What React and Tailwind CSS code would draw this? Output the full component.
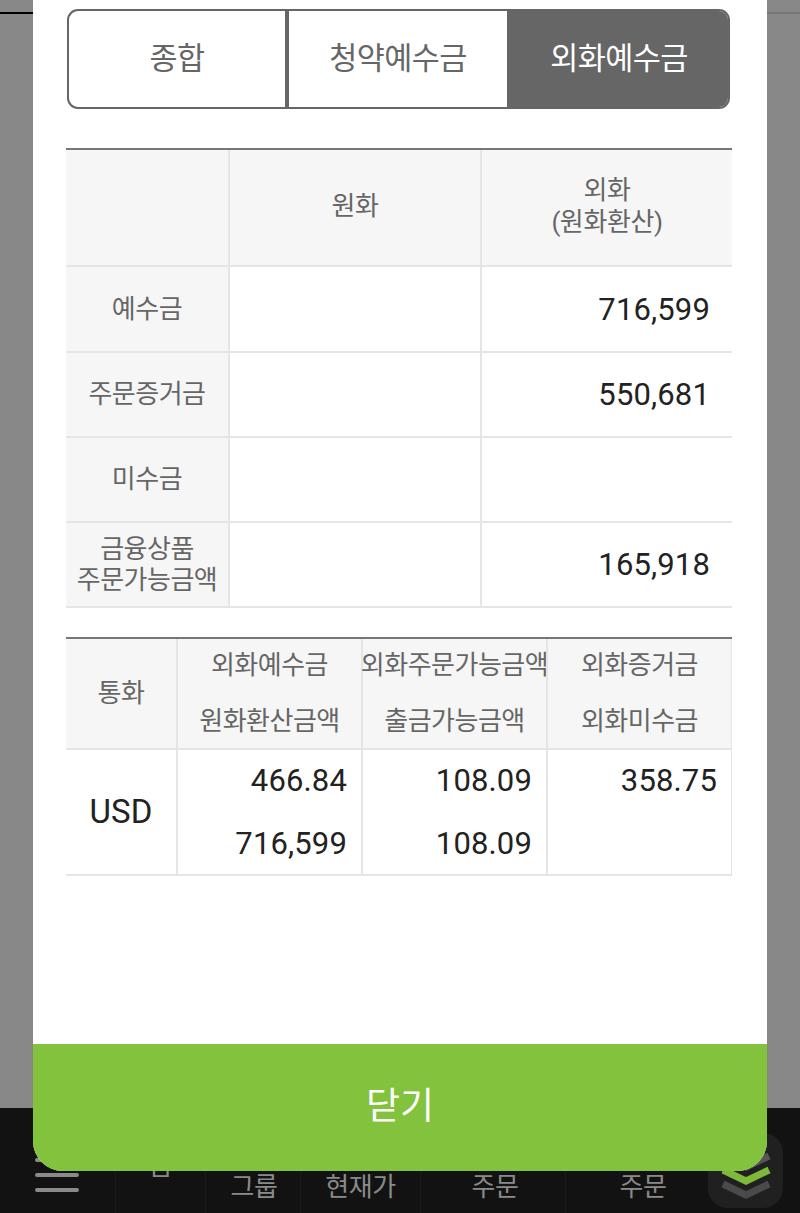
const tabs = [
  { label: '종합', cls: 'w-[220px] border-r-[4px] border-[#666] text-[#666]' },
  { label: '청약예수금', cls: 'w-[218px] text-[#666]' },
  { label: '외화예수금', cls: 'flex-1 bg-[#666] pl-[3px] text-white' },
];

const balanceRows = [
  { label: ['예수금'], value: '716,599', h: 'h-[86px]' },
  { label: ['주문증거금'], value: '550,681', h: 'h-[85px]' },
  { label: ['미수금'], value: '', h: 'h-[85px]' },
  { label: ['금융상품', '주문가능금액'], value: '165,918', h: 'h-[85px]' },
];

const currencyHeads = [
  { top: '외화예수금', bottom: '원화환산금액', w: 'w-[185px]' },
  { top: '외화주문가능금액', bottom: '출금가능금액', w: 'w-[185px]' },
  { top: '외화증거금', bottom: '외화미수금', w: 'w-[186px] border-r' },
];

const currencyVals = [
  { top: '466.84', bottom: '716,599', w: 'w-[185px]' },
  { top: '108.09', bottom: '108.09', w: 'w-[185px]' },
  { top: '358.75', bottom: '', w: 'w-[186px] border-r' },
];

function BalanceTable() {
  return (
    <div className="mt-[39px] w-[666px] border-t-2 border-[#777]">
      <div className="flex h-[117px] border-b-2 border-[#e5e5e5] text-[26px] leading-[32px] tracking-[-0.4px] text-[#666]">
        <div className="w-[162px] bg-[#f6f6f6]" />
        <div className="flex w-[252px] items-center justify-center border-l-2 border-[#e5e5e5] bg-[#f6f6f6] pb-[4px]">원화</div>
        <div className="flex w-[252px] flex-col items-center justify-center border-l-2 border-[#e5e5e5] bg-[#f6f6f6] pb-[4px]">
          <span>외화</span>
          <span>(원화환산)</span>
        </div>
      </div>
      {balanceRows.map((row) => (
        <div key={row.label[0]} className={`flex border-b-2 border-[#e5e5e5] ${row.h}`}>
          <div className="flex w-[162px] flex-col items-center justify-center bg-[#f6f6f6] text-[26px] leading-[31px] tracking-[-0.5px] text-[#666]">
            {row.label.map((line) => (
              <span key={line}>{line}</span>
            ))}
          </div>
          <div className="w-[252px] border-l-2 border-[#e5e5e5]" />
          <div className="flex w-[252px] items-center justify-end border-l-2 border-[#e5e5e5] pt-[2px] pr-[22px] text-[31px] tracking-[0.15px] text-[#222]">
            {row.value}
          </div>
        </div>
      ))}
    </div>
  );
}

function CurrencyTable() {
  return (
    <div className="mt-[29px] w-[666px] border-t-2 border-[#777]">
      <div className="flex h-[111px] border-b-2 border-[#e5e5e5] bg-[#f6f6f6] text-[26px] tracking-[-0.5px] text-[#666]">
        <div className="flex w-[110px] items-center justify-center">통화</div>
        {currencyHeads.map((col) => (
          <div key={col.top} className={`flex flex-col items-center justify-center gap-[24px] border-l-2 border-[#e5e5e5] pb-[2px] leading-[32px] whitespace-nowrap ${col.w}`}>
            <span>{col.top}</span>
            <span>{col.bottom}</span>
          </div>
        ))}
      </div>
      <div className="flex h-[126px] border-b-2 border-[#e5e5e5] text-[31px] leading-[36px] tracking-[0.15px] text-[#222]">
        <div className="flex w-[110px] items-center justify-center text-[33px]">USD</div>
        {currencyVals.map((col) => (
          <div key={col.top} className={`flex flex-col items-end gap-[27px] border-l-2 border-[#e5e5e5] pt-[13px] pr-[14px] ${col.w}`}>
            <span>{col.top}</span>
            <span>{col.bottom}</span>
          </div>
        ))}
      </div>
    </div>
  );
}

function BottomBar() {
  return (
    <div className="flex h-[105px] shrink-0 bg-[#121212] text-[26px] tracking-[-0.5px] text-[#8a8a8a]">
      <div className="flex w-[115px] flex-col gap-[11px] pt-[50px] pl-[35px]">
        <span className="h-[4px] w-[44px] rounded-full bg-[#8a8a8a]" />
        <span className="h-[4px] w-[44px] rounded-full bg-[#8a8a8a]" />
        <span className="h-[4px] w-[44px] rounded-full bg-[#8a8a8a]" />
      </div>
      <div className="w-[90px] border-l border-[#1b1b1b] pt-[42px] text-center leading-[32px]">름</div>
      <div className="w-[95px] border-l border-[#1b1b1b] pt-[61px] pl-[2px] text-center leading-[36px]">그룹</div>
      <div className="w-[120px] border-l border-[#1b1b1b] pt-[61px] text-center leading-[36px]">현재가</div>
      <div className="w-[145px] border-l border-[#1b1b1b] pt-[61px] pl-[4px] text-center leading-[36px]">주문</div>
      <div className="w-[143px] border-l border-[#1b1b1b] pt-[61px] pl-[12px] text-center leading-[36px]">주문</div>
      <div className="pt-[25px]">
        <div className="flex h-[75px] w-[75px] items-center justify-center rounded-[20px] bg-[#202020]">
          <svg width="52" height="60" viewBox="0 0 52 60" fill="none" strokeWidth="7" strokeLinejoin="miter">
            <path d="M3 15 L26 26 L49 15" stroke="#555" />
            <path d="M3 29 L26 40 L49 29" stroke="#7fb93c" />
            <path d="M3 43 L26 54 L49 43" stroke="#4a4a4a" />
          </svg>
        </div>
      </div>
    </div>
  );
}

export default function App() {
  return (
    <div className="relative flex h-[1213px] w-[800px] flex-col overflow-hidden bg-[#888] font-['Roboto','Noto_Sans_CJK_KR',sans-serif]">
      <div className="mt-[12px] flex justify-between">
        <div className="h-[2px] w-[33px] bg-black" />
        <div className="h-[2px] w-[33px] bg-[#757575]" />
      </div>
      <div className="flex-1" />
      <BottomBar />

      {/* modal sits over the page */}
      <div className="absolute top-0 left-[33px] flex h-[1171px] w-[734px] flex-col overflow-hidden rounded-b-[30px] bg-white">
        <div className="flex-1 px-[33px] pt-[9px]">
          <div className="ml-[1px] flex h-[100px] w-[663px] overflow-hidden rounded-[11px] border-2 border-[#666] text-[30.5px] tracking-[-0.6px]">
            {tabs.map((tab) => (
              <div key={tab.label} className={`flex items-center justify-center ${tab.cls}`}>
                {tab.label}
              </div>
            ))}
          </div>
          <BalanceTable />
          <CurrencyTable />
        </div>
        <div className="flex h-[127px] items-center justify-center bg-[#82c23c] pb-[2px] text-[37px] text-white">닫기</div>
      </div>
    </div>
  );
}
